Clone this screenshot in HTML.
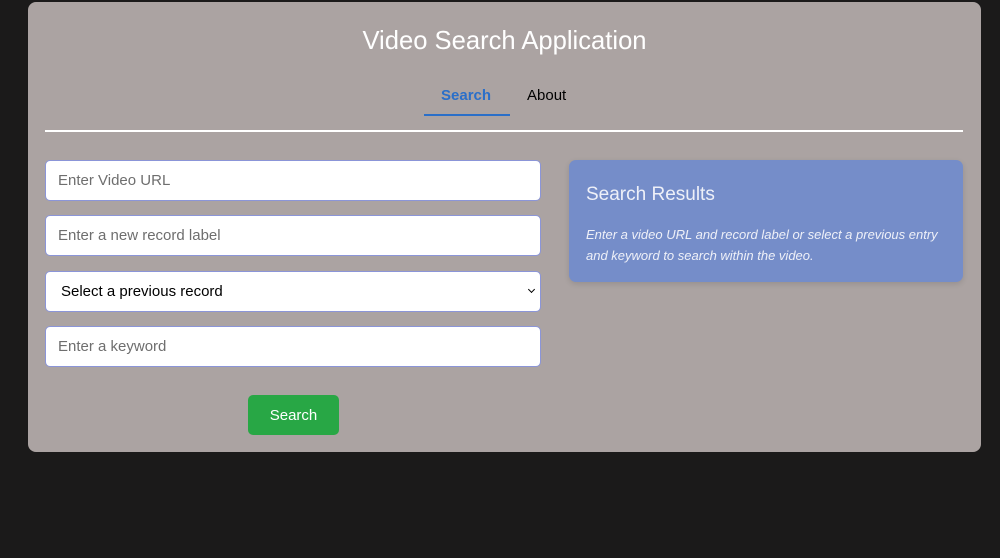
<!DOCTYPE html>
<html><head><style>
*{box-sizing:border-box;margin:0;padding:0}
body{width:1000px;height:558px;background:#1b1a1a;font-family:"Liberation Sans",sans-serif;position:relative;overflow:hidden}
.card{position:absolute;left:28px;top:2px;width:953px;height:450px;background:#aba3a2;border-radius:8px}
h1{position:absolute;left:0;width:1009px;top:27px;text-align:center;color:#fff;font-weight:normal;font-size:25.6px}
.tab{position:absolute;top:87px;font-size:15px}
.t1{left:441px;color:#2a6fc9;font-weight:bold}
.t2{left:527px;color:#000}
.ul{position:absolute;left:424px;top:114px;width:86px;height:2px;background:#2a6fc9}
.hr{position:absolute;left:45px;top:130px;width:918px;height:2px;background:#fff}
.in{position:absolute;left:45px;width:496px;height:41px;background:#fff;border:1px solid #8b95d8;border-radius:5px;padding-left:12px;line-height:40px;font-size:15px;color:#6e6e6e}
.sel{color:#000;padding-left:15px}
.sel::after{content:"";position:absolute;right:6px;top:15px;width:4px;height:4px;border-right:1.5px solid #000;border-bottom:1.5px solid #000;transform:rotate(45deg)}
.btn{position:absolute;left:248px;top:395px;width:91px;height:40px;background:#28a745;border-radius:5px;color:#fff;font-size:15px;text-align:center;line-height:41px}
.res{position:absolute;left:569px;top:160px;width:394px;height:122px;background:#758dc9;border-radius:7px;box-shadow:0 2px 6px rgba(0,0,0,.12);color:#eef0f8}
.res h2{position:absolute;left:17px;top:24px;font-weight:normal;font-size:19px}
.res p{position:absolute;left:17px;top:64px;width:370px;font-style:italic;font-size:13px;line-height:21px}
</style></head><body>
<div class="card"></div>
<h1>Video Search Application</h1>
<div class="tab t1">Search</div><div class="tab t2">About</div>
<div class="ul"></div><div class="hr"></div>
<div class="in" style="top:160px">Enter Video URL</div>
<div class="in" style="top:215px">Enter a new record label</div>
<div class="in sel" style="top:271px">Select a previous record</div>
<div class="in" style="top:326px">Enter a keyword</div>
<div class="btn">Search</div>
<div class="res"><h2>Search Results</h2><p>Enter a video URL and record label or select a previous entry and keyword to search within the video.</p></div>
</body></html>
